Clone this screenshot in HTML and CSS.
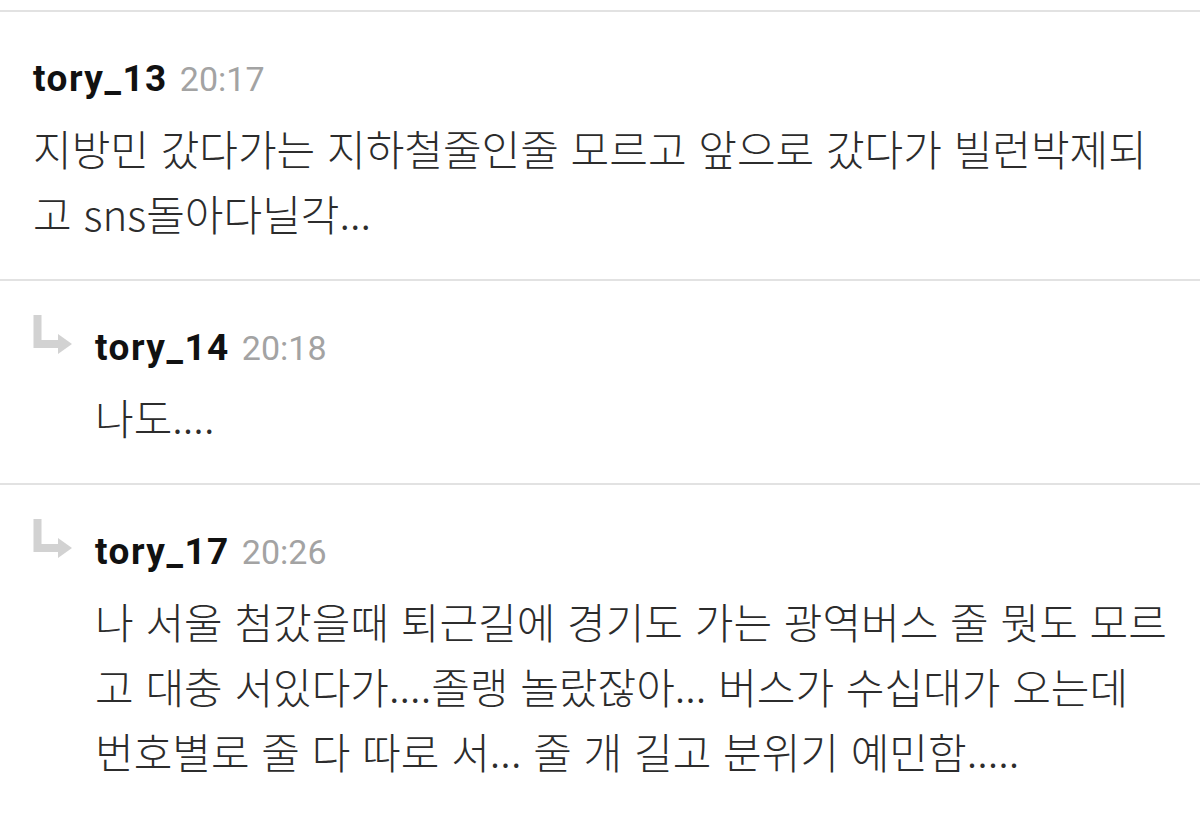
FILE: index.html
```html
<!DOCTYPE html>
<html lang="ko">
<head>
<meta charset="utf-8">
<link rel="stylesheet" href="styles.css">
</head>
<body>
<div class="thread">
  <div class="comment">
    <div class="content">
      <div class="meta"><span class="name">tory_13</span><span class="time">20:17</span></div>
      <div class="text">지방민 갔다가는 지하철줄인줄 모르고 앞으로 갔다가 빌런박제되고 sns돌아다닐각...</div>
    </div>
  </div>
  <div class="comment reply">
    <svg class="arrow" viewBox="0 0 40 40" width="40" height="40"><path d="M4.5 0 V29 H27" fill="none" stroke="#d2d2d2" stroke-width="8"/><path d="M25 19 L39 29 L25 39 Z" fill="#d2d2d2"/></svg>
    <div class="content">
      <div class="meta"><span class="name">tory_14</span><span class="time">20:18</span></div>
      <div class="text">나도....</div>
    </div>
  </div>
  <div class="comment reply">
    <svg class="arrow" viewBox="0 0 40 40" width="40" height="40"><path d="M4.5 0 V29 H27" fill="none" stroke="#d2d2d2" stroke-width="8"/><path d="M25 19 L39 29 L25 39 Z" fill="#d2d2d2"/></svg>
    <div class="content">
      <div class="meta"><span class="name">tory_17</span><span class="time">20:26</span></div>
      <div class="text">나 서울 첨갔을때 퇴근길에 경기도 가는 광역버스 줄 뭣도 모르고 대충 서있다가....졸랭 놀랐잖아... 버스가 수십대가 오는데 번호별로 줄 다 따로 서... 줄 개 길고 분위기 예민함.....</div>
    </div>
  </div>
</div>
</body>
</html>
```

FILE: styles.css
```css
html, body {
  margin: 0;
  padding: 0;
  background: #ffffff;
}
body {
  font-family: "Noto Sans CJK KR", "Noto Sans", sans-serif;
  overflow: hidden;
}
.thread {
  padding-top: 10px;
}
.comment {
  display: flex;
  border-top: 2px solid #e2e2e2;
  padding: 42px 28px 34px 33px;
}
.reply {
  padding-left: 33px;
}
.arrow {
  flex: none;
  width: 40px;
  height: 40px;
  margin-top: -8px;
  margin-right: 22px;
}
.content {
  flex: 1;
  min-width: 0;
}
.meta {
  height: 50px;
  line-height: 50px;
  margin-bottom: 11px;
  white-space: nowrap;
}
.name {
  font-family: Roboto, "Noto Sans", sans-serif;
  font-weight: 700;
  font-size: 37px;
  color: #111;
  letter-spacing: 1.5px;
}
.time {
  font-family: Roboto, "Noto Sans", sans-serif;
  font-size: 34px;
  color: #a3a3a3;
  margin-left: 12px;
}
.text {
  font-size: 42px;
  font-weight: 300;
  line-height: 65px;
  color: #2c2c2c;
}
```
